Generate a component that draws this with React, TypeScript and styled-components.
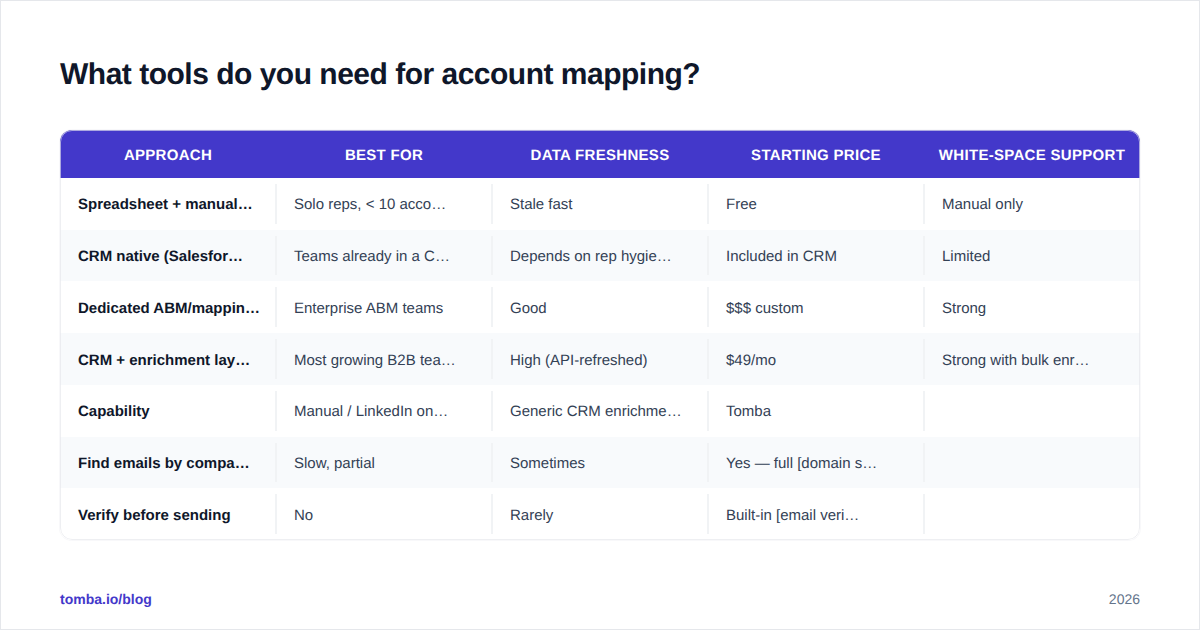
import React from "react";
import styled, { createGlobalStyle } from "styled-components";

const GlobalStyle = createGlobalStyle`
  html, body { margin: 0; padding: 0; background: #fff; }
  body {
    font-family: "Liberation Sans", Arial, sans-serif;
    text-rendering: geometricPrecision;
    -webkit-font-smoothing: antialiased;
  }
  * { box-sizing: border-box; }
`;

const Frame = styled.div`
  width: 1200px;
  height: 630px;
  border: 1px solid #e5e7eb;
  background: #fff;
  padding: 0 59px;
  display: flex;
  flex-direction: column;
  overflow: hidden;
`;

const Title = styled.h1`
  margin: 0;
  padding-top: 55px;
  height: 129px;
  font-size: 30px;
  line-height: 38px;
  font-weight: 700;
  letter-spacing: -0.5px;
  color: #0f172a;
`;

const Table = styled.div`
  height: 410px;
  flex: none;
  display: flex;
  flex-direction: column;
  border-radius: 12px;
  overflow: hidden;
  position: relative;
  box-shadow: 0 0 0 1px rgba(243, 244, 246, 0.6);

  /* hairline sits over the header and the rows */
  &::after {
    content: "";
    position: absolute;
    inset: 0;
    border: 1px solid rgba(229, 231, 235, 0.65);
    border-radius: 12px;
    pointer-events: none;
  }
`;

const HeadRow = styled.div`
  display: grid;
  grid-template-columns: repeat(5, 216px);
  height: 48px;
  flex: none;
  background: #4338ca;
`;

const HeadCell = styled.div`
  display: flex;
  align-items: center;
  justify-content: center;
  padding-top: 2px;
  white-space: nowrap;
  font-size: 15px;
  font-weight: 700;
  letter-spacing: 0.3px;
  color: #fff;
`;

const Row = styled.div<{ $alt: boolean }>`
  flex: 1;
  display: grid;
  grid-template-columns: repeat(5, 216px);
  background: ${(p) => (p.$alt ? "#f8fafc" : "#fff")};
`;

const Cell = styled.div<{ $first: boolean; $last: boolean }>`
  display: flex;
  align-items: center;
  padding: 2px 0 0 18px;
  white-space: nowrap;
  font-size: 15px;
  font-weight: ${(p) => (p.$first ? 700 : 400)};
  color: ${(p) => (p.$first ? "#0f172a" : "#334155")};
  position: relative;

  &::after {
    content: "";
    display: ${(p) => (p.$last ? "none" : "block")};
    position: absolute;
    right: -1px;
    top: 6px;
    bottom: 6px;
    width: 2px;
    background: #f1f3f5;
  }
`;

const Footer = styled.div`
  display: flex;
  justify-content: space-between;
  align-items: center;
  padding-top: 50px;
  font-size: 14px;
  line-height: 18px;
`;

const Brand = styled.span`
  font-weight: 700;
  color: #4338ca;
`;

const Year = styled.span`
  color: #64748b;
`;

const headers = ["APPROACH", "BEST FOR", "DATA FRESHNESS", "STARTING PRICE", "WHITE-SPACE SUPPORT"];

const rows = [
  ["Spreadsheet + manual…", "Solo reps, < 10 acco…", "Stale fast", "Free", "Manual only"],
  ["CRM native (Salesfor…", "Teams already in a C…", "Depends on rep hygie…", "Included in CRM", "Limited"],
  ["Dedicated ABM/mappin…", "Enterprise ABM teams", "Good", "$$$ custom", "Strong"],
  ["CRM + enrichment lay…", "Most growing B2B tea…", "High (API-refreshed)", "$49/mo", "Strong with bulk enr…"],
  ["Capability", "Manual / LinkedIn on…", "Generic CRM enrichme…", "Tomba", ""],
  ["Find emails by compa…", "Slow, partial", "Sometimes", "Yes — full [domain s…", ""],
  ["Verify before sending", "No", "Rarely", "Built-in [email veri…", ""],
];

export default function App() {
  return (
    <>
      <GlobalStyle />
      <Frame>
        <Title>What tools do you need for account mapping?</Title>
        <Table>
          <HeadRow>
            {headers.map((h) => (
              <HeadCell key={h}>{h}</HeadCell>
            ))}
          </HeadRow>
          {rows.map((row, i) => (
            <Row key={row[0]} $alt={i % 2 === 1}>
              {row.map((c, j) => (
                <Cell key={j} $first={j === 0} $last={j === 4}>
                  {c}
                </Cell>
              ))}
            </Row>
          ))}
        </Table>
        <Footer>
          <Brand>tomba.io/blog</Brand>
          <Year>2026</Year>
        </Footer>
      </Frame>
    </>
  );
}
